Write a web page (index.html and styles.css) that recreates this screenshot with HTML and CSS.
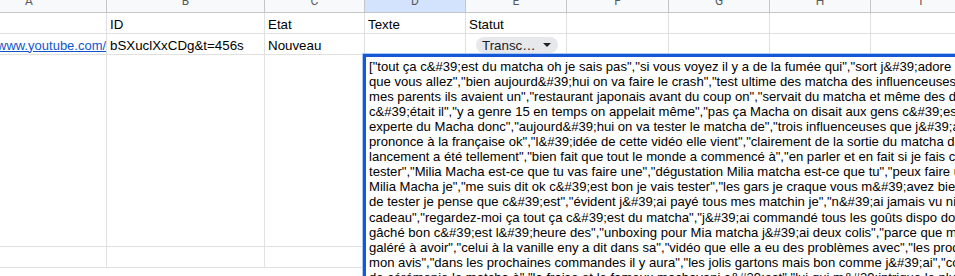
FILE: index.html
```html
<!DOCTYPE html>
<html lang="fr">
<head>
<meta charset="utf-8">
<title>Feuille</title>
<link rel="stylesheet" href="styles.css">
</head>
<body>
<div class="sheet">
  <div class="hd"><span class="lbl lbl-a">A</span></div>
  <div class="hd"><span class="lbl">B</span></div>
  <div class="hd"><span class="lbl">C</span></div>
  <div class="hd hd-active"><span class="lbl">D</span></div>
  <div class="hd"><span class="lbl">E</span></div>
  <div class="hd"><span class="lbl">F</span></div>
  <div class="hd"><span class="lbl">G</span></div>
  <div class="hd"><span class="lbl">H</span></div>
  <div class="hd"><span class="lbl">I</span></div>

  <div class="cell"></div>
  <div class="cell">ID</div>
  <div class="cell">Etat</div>
  <div class="cell">Texte</div>
  <div class="cell">Statut</div>
  <div class="cell"></div>
  <div class="cell"></div>
  <div class="cell"></div>
  <div class="cell"></div>

  <div class="cell cell-link"><span class="link">https://www.youtube.com/</span></div>
  <div class="cell">bSXuclXxCDg&amp;t=456s</div>
  <div class="cell">Nouveau</div>
  <div class="cell"></div>
  <div class="cell cell-chip">
    <span class="chip"><span class="chip-text">Transc…</span><svg class="chip-arrow" width="8" height="4" viewBox="0 0 8 4"><path d="M0 0H8L4 4Z"/></svg></span>
  </div>
  <div class="cell"></div>
  <div class="cell"></div>
  <div class="cell"></div>
  <div class="cell"></div>

  <div class="cell"></div><div class="cell"></div><div class="cell"></div>
  <div class="cell"></div><div class="cell"></div><div class="cell"></div>
  <div class="cell"></div><div class="cell"></div><div class="cell"></div>

  <div class="cell"></div><div class="cell"></div><div class="cell"></div>
  <div class="cell"></div><div class="cell"></div><div class="cell"></div>
  <div class="cell"></div><div class="cell"></div><div class="cell"></div>
</div>

<div class="editor">
  <div class="ln">["tout ça c&amp;#39;est du matcha oh je sais pas","si vous voyez il y a de la fumée qui","sort j&amp;#39;adore ma</div>
  <div class="ln">que vous allez","bien aujourd&amp;#39;hui on va faire le crash","test ultime des matcha des influenceuses","</div>
  <div class="ln">mes parents ils avaient un","restaurant japonais avant du coup on","servait du matcha et même des desserts</div>
  <div class="ln">c&amp;#39;était il","y a genre 15 en temps on appelait même","pas ça Macha on disait aux gens c&amp;#39;est</div>
  <div class="ln">experte du Macha donc","aujourd&amp;#39;hui on va tester le matcha de","trois influenceuses que j&amp;#39;ai</div>
  <div class="ln">prononce à la française ok","l&amp;#39;idée de cette vidéo elle vient","clairement de la sortie du matcha de</div>
  <div class="ln">lancement a été tellement","bien fait que tout le monde a commencé à","en parler et en fait si je fais ce</div>
  <div class="ln">tester","Milia Macha est-ce que tu vas faire une","dégustation Milia matcha est-ce que tu","peux faire une</div>
  <div class="ln">Milia Macha je","me suis dit ok c&amp;#39;est bon je vais tester","les gars je craque vous m&amp;#39;avez bien</div>
  <div class="ln">de tester je pense que c&amp;#39;est","évident j&amp;#39;ai payé tous mes matchin je","n&amp;#39;ai jamais vu ni</div>
  <div class="ln">cadeau","regardez-moi ça tout ça c&amp;#39;est du matcha","j&amp;#39;ai commandé tous les goûts dispo donc</div>
  <div class="ln">gâché bon c&amp;#39;est l&amp;#39;heure des","unboxing pour Mia matcha j&amp;#39;ai deux colis","parce que ma</div>
  <div class="ln">galéré à avoir","celui à la vanille eny a dit dans sa","vidéo que elle a eu des problèmes avec","les produits</div>
  <div class="ln">mon avis","dans les prochaines commandes il y aura","les jolis gartons mais bon comme j&amp;#39;ai","comme</div>
  <div class="ln">de cérémonie le matcha à","la fraise et le fameux machayani c&amp;#39;est","lui qui m&amp;#39;intrigue le plus</div>
</div>
</body>
</html>
```

FILE: styles.css
```css
html, body {
  margin: 0;
  padding: 0;
}

body {
  width: 955px;
  height: 276px;
  overflow: hidden;
  position: relative;
  background: #ffffff;
  font-family: "Liberation Sans", Arial, sans-serif;
  font-size: 13.33px;
  color: #000000;
}

.sheet {
  display: grid;
  grid-template-columns: 107px 158px 100px 101px 101px 102px 101px 101px 101px;
  grid-template-rows: 13px 21px 21px 192px 21px;
  width: 972px;
}

.hd {
  box-sizing: border-box;
  background: #f8f9fa;
  border-right: 1px solid #c4c7c5;
  border-bottom: 1px solid #c4c7c5;
  display: flex;
  justify-content: center;
  align-items: flex-end;
  overflow: hidden;
}

.hd-active {
  background: #d3e3fd;
}

.lbl {
  font-family: Roboto, "Liberation Sans", sans-serif;
  font-size: 12px;
  line-height: 12px;
  color: #575a5e;
  margin-bottom: 5px;
}

.lbl-a {
  margin-right: 48px;
}

.cell {
  box-sizing: border-box;
  border-right: 1px solid #e1e1e1;
  border-bottom: 1px solid #e1e1e1;
  padding: 0 3px 1.5px 3px;
  display: flex;
  align-items: flex-end;
  overflow: hidden;
  white-space: nowrap;
  line-height: 15px;
}

.cell-link {
  padding-left: 0;
}

.link {
  color: #1155cc;
  text-decoration: underline;
  margin-left: -42px;
  font-size: 13px;
}

.cell-chip {
  padding: 0;
  align-items: center;
}

.chip {
  display: flex;
  align-items: center;
  box-sizing: border-box;
  width: 82px;
  height: 16px;
  margin: 2px 0 0 10px;
  padding: 0 7px 0 6px;
  border-radius: 8px;
  background: #e6e8eb;
  color: #202124;
  line-height: 15px;
}

.chip-text {
  flex: 1;
}

.chip-arrow {
  fill: #202124;
  display: block;
}

.editor {
  position: absolute;
  left: 363px;
  top: 54px;
  width: 700px;
  height: 300px;
  box-sizing: border-box;
  background: #ffffff;
  border: 3px solid #1558d6;
  box-shadow: 0 0 0 1px #a8c7fa;
  padding: 1.6px 0 0 3px;
  font-size: 13.1px;
  line-height: 15.1px;
  z-index: 2;
}

.ln {
  white-space: nowrap;
}
```
